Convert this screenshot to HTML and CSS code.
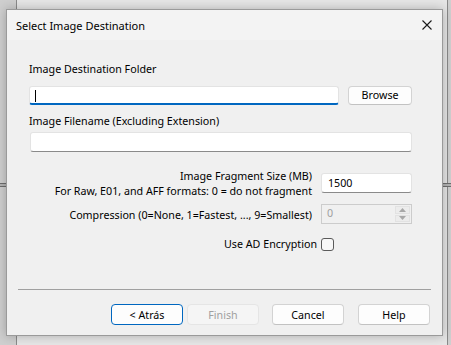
FILE: index.html
```html
<!DOCTYPE html>
<html>
<head>
    <meta charset="utf-8">
    <title>Select Image Destination</title>
    <link rel="stylesheet" href="styles.css">
</head>
<body>

    <div class="back-window"></div>
    <div class="splitter"></div>

    <div class="dialog">
        <div class="titlebar">
            <span class="title">Select Image Destination</span>
            <svg class="close" width="10" height="10" viewBox="0 0 10 10">
                <path d="M0.5 0.5 L9.5 9.5 M9.5 0.5 L0.5 9.5" stroke="#1a1a1a" stroke-width="1.1" fill="none"/>
            </svg>
        </div>

        <div class="content">
            <div class="field-label">Image Destination Folder</div>
            <div class="path-row">
                <div class="textbox focused"><span class="caret"></span></div>
                <button class="btn browse">Browse</button>
            </div>

            <div class="field-label second">Image Filename (Excluding Extension)</div>
            <div class="textbox wide"></div>

            <div class="option-grid">
                <div class="opt-label">Image Fragment Size (MB)<br>For Raw, E01, and AFF formats: 0 = do not fragment</div>
                <div class="textbox small">1500</div>

                <div class="opt-label compress">Compression (0=None, 1=Fastest, ..., 9=Smallest)</div>
                <div class="spinbox">
                    <span class="spin-value">0</span>
                    <div class="spin-btns">
                        <span class="spin-btn">
                            <svg width="7" height="4" viewBox="0 0 7 4"><path d="M0 4 L3.5 0 L7 4 Z" fill="#a8a8a8"/></svg>
                        </span>
                        <span class="spin-btn">
                            <svg width="7" height="4" viewBox="0 0 7 4"><path d="M0 0 L3.5 4 L7 0 Z" fill="#a8a8a8"/></svg>
                        </span>
                    </div>
                </div>
            </div>

            <div class="check-row">
                <span>Use AD Encryption</span>
                <span class="checkbox"></span>
            </div>
        </div>

        <div class="footer">
            <div class="separator"></div>
            <div class="button-group">
                <button class="btn default">&lt; Atrás</button>
                <button class="btn disabled">Finish</button>
                <button class="btn cancel">Cancel</button>
                <button class="btn help">Help</button>
            </div>
        </div>
    </div>

</body>
</html>
```

FILE: styles.css
```css
* {
    margin: 0;
    padding: 0;
    box-sizing: border-box;
}

body {
    width: 451px;
    height: 345px;
    overflow: hidden;
    position: relative;
    font-family: "Noto Sans", "Open Sans", sans-serif;
    font-size: 10.7px;
    color: #000;
    background: #cfcfcf;
}

/* window sitting behind the dialog */
.back-window {
    position: absolute;
    left: 16px;
    top: -10px;
    width: 432px;
    height: 370px;
    background: #e6e6e6;
    border: 1px solid #8a8a8a;
}

.splitter {
    position: absolute;
    left: 0;
    right: 0;
    top: 183px;
    height: 4px;
    background: #b4b4b4;
    border-top: 1px solid #6e6e6e;
    border-bottom: 1px solid #6e6e6e;
}

.dialog {
    position: absolute;
    left: 6px;
    top: 9px;
    width: 437px;
    height: 327px;
    display: flex;
    flex-direction: column;
    background: #f0f0f0;
    border: 1px solid #9a9a9a;
    box-shadow: 0 0 10px rgba(0,0,0,0.25);
}

.titlebar {
    height: 30px;
    display: flex;
    align-items: center;
    justify-content: space-between;
    padding: 0 10px 0 9px;
    background: #f3f3f3;
}

.title {
    font-size: 11px;
    line-height: 15px;
}

.content {
    flex: 1;
    padding: 22px 30px 0 22px;
}

.field-label {
    line-height: 15px;
    margin-bottom: 9px;
}

.field-label.second {
    margin-top: 9px;
    margin-bottom: 3px;
}

.path-row {
    display: flex;
    gap: 9px;
}

.textbox {
    height: 20px;
    background: #fff;
    border: 1px solid #e3e3e3;
    border-bottom-color: #8a8a8a;
    border-radius: 3px;
    padding: 0 8px;
    line-height: 18px;
}

.textbox.focused {
    width: 311px;
    height: 19px;
    border-bottom: 2px solid #0067c0;
    position: relative;
}

.caret {
    position: absolute;
    left: 5px;
    top: 3px;
    width: 1px;
    height: 12px;
    background: #000;
}

.textbox.wide {
    margin-left: 1px;
}

.textbox.small {
    margin-top: 4px;
    padding-left: 6px;
}

.btn {
    height: 21px;
    width: 72px;
    font-family: inherit;
    font-size: 10.7px;
    color: #000;
    background: #fdfdfd;
    border: 1px solid #d3d3d3;
    border-bottom-color: #c2c2c2;
    border-radius: 4px;
}

.btn.browse {
    width: 64px;
    height: 19px;
    line-height: 15px;
}

.option-grid {
    display: grid;
    grid-template-columns: 1fr 91px;
    column-gap: 9px;
    row-gap: 5px;
    margin-top: 17px;
}

.opt-label {
    text-align: right;
    line-height: 15px;
}

.opt-label.compress {
    padding-top: 4px;
}

.spinbox {
    height: 20px;
    display: flex;
    justify-content: space-between;
    border: 1px solid #cccccc;
    background: #f0f0f0;
    padding: 0 0 0 5px;
}

.spin-value {
    color: #a0a0a0;
    line-height: 17px;
}

.spin-btns {
    width: 17px;
    display: flex;
    flex-direction: column;
    gap: 1px;
    padding: 1px;
}

.spin-btn {
    flex: 1;
    display: flex;
    align-items: center;
    justify-content: center;
    background: #ececec;
    border: 1px solid #e2e2e2;
}

.check-row {
    display: flex;
    justify-content: flex-end;
    align-items: center;
    gap: 4px;
    margin-top: 13px;
    padding-right: 78px;
    line-height: 15px;
}

.checkbox {
    width: 13px;
    height: 13px;
    border: 1px solid #5a5a5a;
    border-radius: 3px;
    background: #f7f7f7;
}

.footer {
    padding-bottom: 10px;
}

.separator {
    height: 1px;
    margin: 0 11px;
    background: #a0a0a0;
}

.button-group {
    display: flex;
    justify-content: flex-end;
    padding: 14px 12px 0 0;
}

.btn.default {
    border: 1px solid #0067c0;
}

.btn.disabled {
    margin-left: 4px;
    color: #a0a0a0;
    background: #f5f5f5;
    border-color: #e5e5e5;
}

.btn.cancel {
    margin-left: 13px;
}

.btn.help {
    margin-left: 14px;
}
```
